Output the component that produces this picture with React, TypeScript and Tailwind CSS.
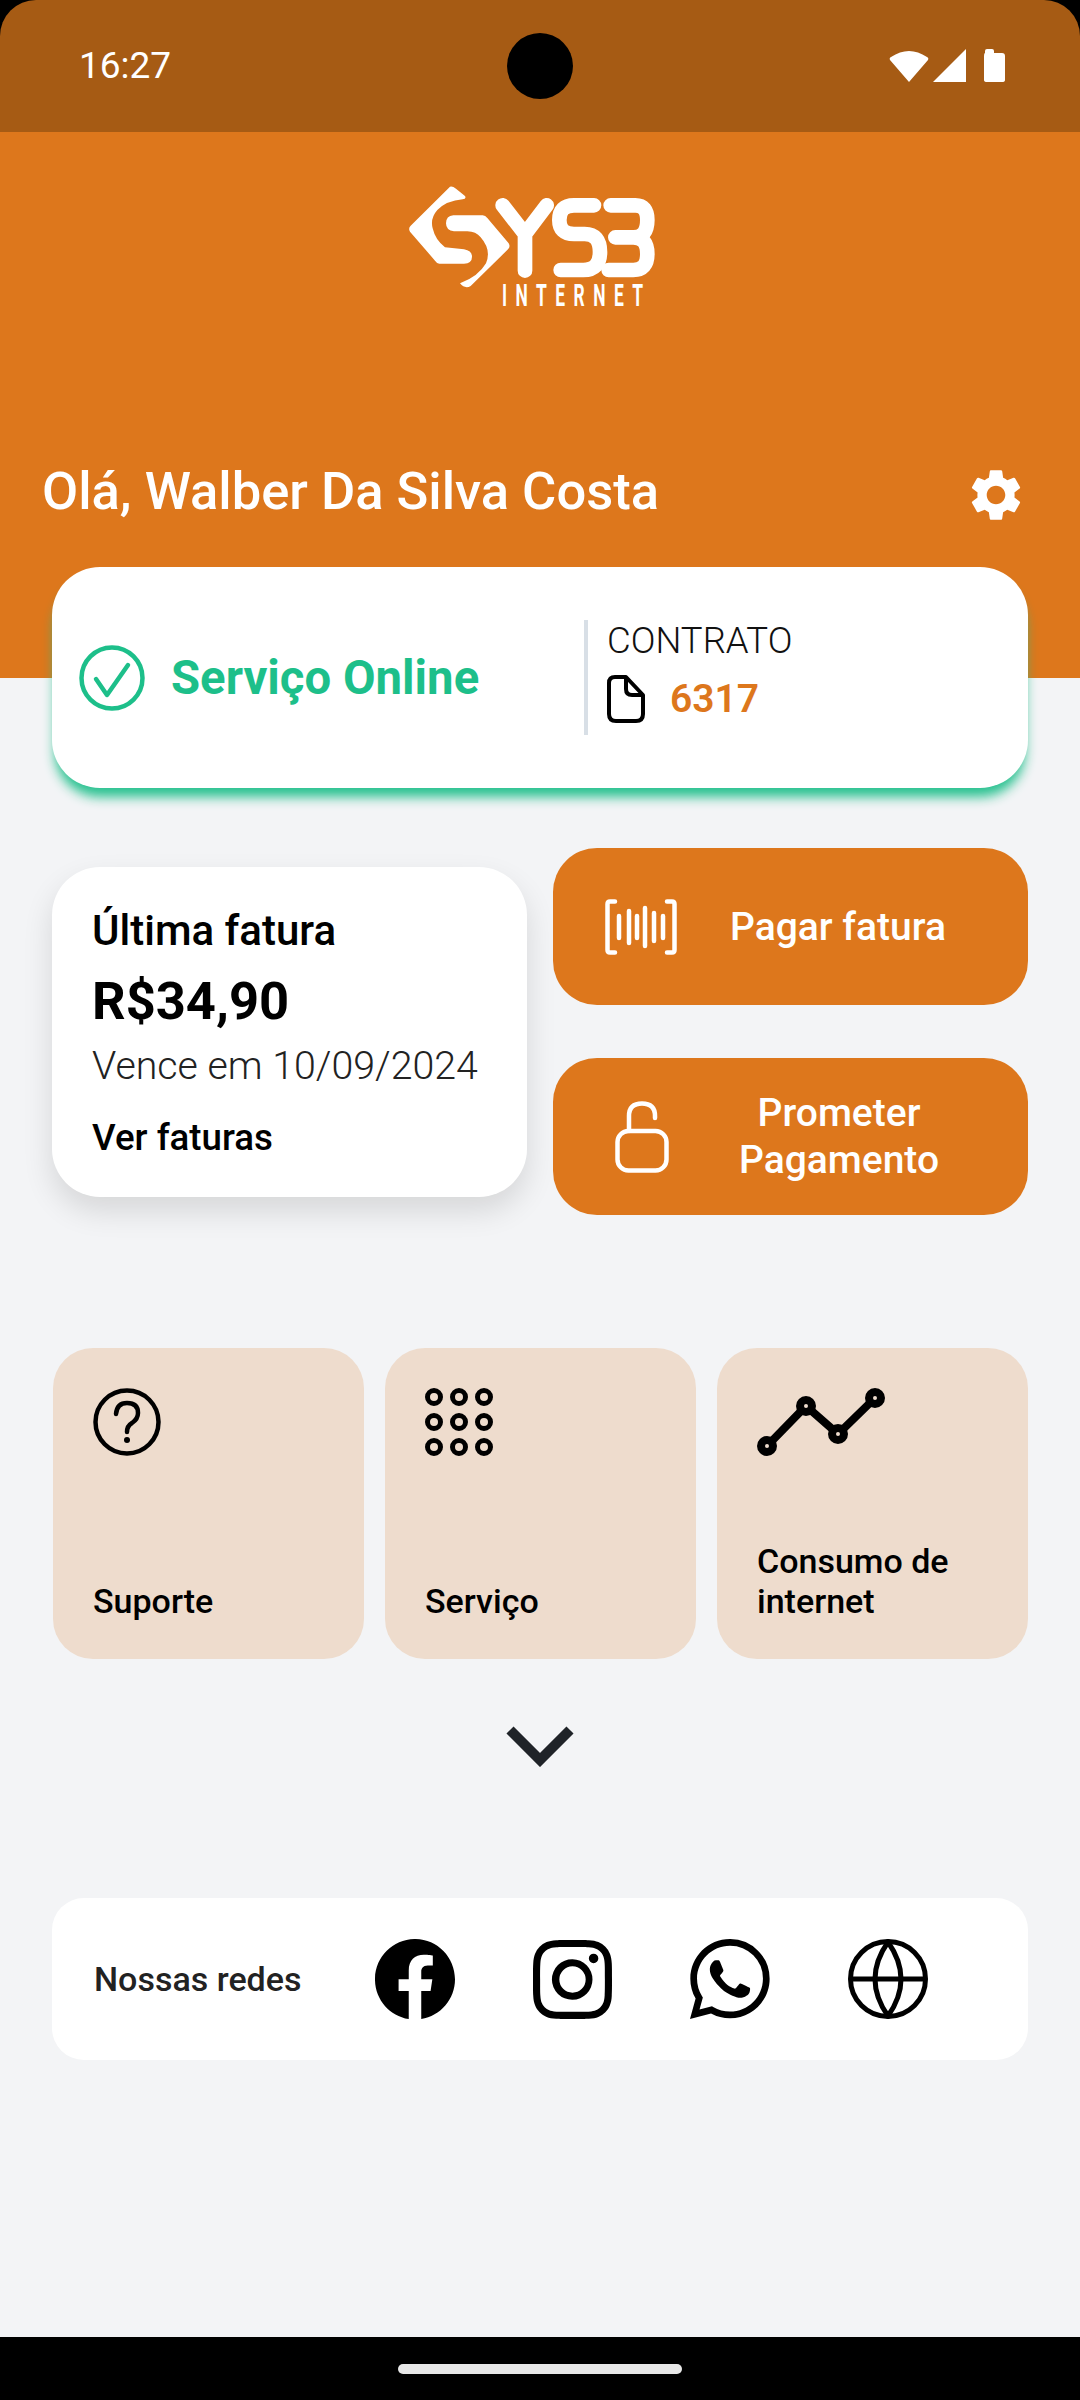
import { MdSettings } from 'react-icons/md';
import { BsFacebook, BsInstagram, BsWhatsapp } from 'react-icons/bs';

const font = { fontFamily: 'Roboto, sans-serif' };

function Logo() {
  return (
    <svg width="340" height="170" viewBox="0 0 1020 510" aria-label="SYS3 Internet">
      <path
        d="M300 80 Q308 78 318 86 L345 108 Q350 116 338 118 Q290 122 262 150 Q240 175 248 205 Q256 240 285 262 L342 268 Q366 272 366 290 Q366 310 342 311 L268 311 Q260 310 255 302 L180 215 Q174 205 182 197 Z"
        fill="#fff"
      />
      <path
        d="M310 166 L398 166 Q406 166 412 174 L476 250 Q482 260 474 268 L362 378 Q345 388 330 370 Q385 350 408 310 Q425 270 392 232 Q378 214 352 214 L312 214 Q288 212 288 190 Q288 168 310 166 Z"
        fill="#fff"
      />
      <g fill="none" stroke="#fff" strokeWidth="44" strokeLinecap="round" strokeLinejoin="round">
        <path d="M458 136 L525 222 L590 136 M525 222 V332" />
        <path d="M732 136 H672 Q628 136 628 180 Q628 222 672 222 H704 Q750 222 750 276 Q750 330 700 330 H632" />
        <path d="M782 136 H856 Q892 136 892 180 Q892 232 850 232 H796 M850 232 Q892 232 892 282 Q892 330 850 330 H776" />
      </g>
      <text
        x="0"
        y="0"
        transform="translate(456 438) scale(0.55 1)"
        fontFamily="Roboto, sans-serif"
        fontWeight="700"
        fontSize="95"
        fill="#fff"
        textLength="770"
        lengthAdjust="spacing"
      >
        INTERNET
      </text>
    </svg>
  );
}

function StatusIcons() {
  return (
    <svg width="116" height="34" viewBox="0 0 116 34" fill="#fff">
      <path d="M2 8 Q20 -4 38 8 Q40 9 39 11 L20 33 L1 11 Q0 9 2 8 Z" />
      <path d="M77 0 V33 H44 Z" />
      <path d="M96 4 V2 Q96 0 98 0 H103 Q105 0 105 2 V4 H113 Q116 4 116 7 V31 Q116 33 113 33 H98 Q95 33 95 31 V7 Q95 4 96 4 Z" />
    </svg>
  );
}

function CheckCircle() {
  return (
    <svg width="66" height="66" viewBox="0 0 66 66" fill="none" stroke="#1dbf8a" strokeWidth="4.5" className="shrink-0">
      <circle cx="33" cy="33" r="30.5" />
      <path d="M17 34 L28 50 L49 20" strokeLinecap="round" strokeLinejoin="round" />
    </svg>
  );
}

function FileIcon() {
  return (
    <svg width="38" height="48" viewBox="0 0 38 48" fill="none" stroke="#000" strokeWidth="4" strokeLinejoin="round" className="shrink-0">
      <path d="M8 2 H19 L36 20 V39 Q36 46 29 46 H9 Q2 46 2 39 V8 Q2 2 8 2 Z" />
      <path d="M19 2 V14 Q19 20 25 20 H36" />
    </svg>
  );
}

function BarcodeIcon() {
  return (
    <svg width="72" height="56" viewBox="0 0 72 56" fill="none" stroke="#fff" strokeWidth="4.5" strokeLinecap="round" className="shrink-0">
      <path d="M10 2.5 H5 Q2.5 2.5 2.5 5 V51 Q2.5 53.5 5 53.5 H10" />
      <path d="M62 2.5 H67 Q69.5 2.5 69.5 5 V51 Q69.5 53.5 67 53.5 H62" />
      <path d="M14 17 V39 M24 12 V44 M32 17 V39 M40 9 V47 M49 14 V42 M58 17 V39" />
    </svg>
  );
}

function LockIcon() {
  return (
    <svg width="54" height="72" viewBox="0 0 54 72" fill="none" stroke="#fff" strokeWidth="4.5" strokeLinecap="round" className="shrink-0">
      <rect x="2.5" y="30" width="49" height="39.5" rx="11" />
      <path d="M14 30 V15 Q14 2.5 27 2.5 Q40 2.5 40 15 V17" />
    </svg>
  );
}

function HelpIcon() {
  return (
    <svg width="68" height="68" viewBox="0 0 68 68" fill="none" stroke="#000" strokeWidth="4.5">
      <circle cx="34" cy="34" r="31.5" />
      <path d="M23 26 Q24 15 34 15 Q45 15 45 25 Q45 31 39 35 Q34 38 34 44" strokeLinecap="round" />
      <circle cx="34" cy="52" r="3" fill="#000" stroke="none" />
    </svg>
  );
}

function GridIcon() {
  const spots = [9, 34, 59];
  return (
    <svg width="68" height="68" viewBox="0 0 68 68" fill="none" stroke="#000" strokeWidth="5">
      {spots.map((y) => spots.map((x) => <circle key={`${x}-${y}`} cx={x} cy={y} r="6.5" />))}
    </svg>
  );
}

function ChartIcon() {
  return (
    <svg width="128" height="68" viewBox="0 0 128 68" fill="none" stroke="#000">
      <path d="M10 58 L49 18 L81 46 L118 10" strokeWidth="8" />
      {[
        [10, 58],
        [49, 18],
        [81, 46],
        [118, 10],
      ].map(([x, y]) => (
        <circle key={x} cx={x} cy={y} r="6" strokeWidth="8" fill="#eedccd" />
      ))}
    </svg>
  );
}

function GlobeIcon() {
  return (
    <svg width="80" height="80" viewBox="0 0 80 80" fill="none" stroke="#000" strokeWidth="5">
      <circle cx="40" cy="40" r="37.5" />
      <path d="M2 40 H78" />
      <path d="M40 3 Q14 40 40 77 Q66 40 40 3 Z" />
    </svg>
  );
}

function Tile({ icon, label }: { icon: React.ReactNode; label: React.ReactNode }) {
  return (
    <div className="flex h-[311px] flex-col justify-between rounded-[40px] bg-[#eedccd] pt-10 pr-4 pb-[38px] pl-10">
      <div>{icon}</div>
      <div className="text-[34px] leading-[40px] font-medium text-black">{label}</div>
    </div>
  );
}

export default function App() {
  return (
    <div className="flex h-[2400px] w-[1080px] flex-col bg-black" style={font}>
      {/* Status bar */}
      <div className="relative flex h-[132px] shrink-0 items-start justify-between rounded-t-[36px] bg-[#a65b14] pt-[46px] pr-[75px] pl-[79px]">
        <span className="text-[37px] leading-[40px] text-white">16:27</span>
        <div className="absolute top-[33px] left-[507px] h-[66px] w-[66px] rounded-full bg-black" />
        <div className="pt-[3px]">
          <StatusIcons />
        </div>
      </div>

      <div className="flex min-h-0 flex-1 flex-col bg-[#f3f4f6]">
        {/* Header */}
        <div className="flex h-[546px] shrink-0 flex-col bg-[#dd771c]">
          <div className="flex justify-center pt-[28px] pr-[40px]">
            <Logo />
          </div>
          <div className="mt-[126px] flex items-center justify-between pr-[53px] pl-[42px]">
            <h1 className="text-[52.5px] leading-[60px] font-medium text-white">Olá, Walber Da Silva Costa</h1>
            <MdSettings className="mt-[8px] h-[62px] w-[62px] text-white" />
          </div>
        </div>

        {/* Service status card */}
        <div className="mx-[52px] mt-[-111px] flex h-[221px] shrink-0 items-center rounded-[48px] bg-white pl-[27px] shadow-[0_12px_12px_-3px_rgba(29,191,138,0.95)]">
          <div className="flex w-[505px] items-center gap-[26px]">
            <CheckCircle />
            <span className="mt-[2px] text-[47.3px] font-bold text-[#1dbf8a]">Serviço Online</span>
          </div>
          <div className="flex h-[115px] items-stretch gap-[19px]">
            <div className="w-1 bg-[#d8dfe6]" />
            <div>
              <div className="mt-[1px] text-[36.5px] leading-[40px] font-light text-[#111]">CONTRATO</div>
              <div className="mt-[14px] flex items-center gap-[25px]">
                <FileIcon />
                <span className="text-[39px] leading-[48px] font-semibold text-[#dd771c]">6317</span>
              </div>
            </div>
          </div>
        </div>

        {/* Invoice and actions */}
        <div className="mx-[52px] mt-[60px] grid shrink-0 grid-cols-2 gap-x-[26px]">
          <div className="mt-[19px] flex h-[330px] flex-col rounded-[48px] bg-white pt-[39px] pl-10 shadow-[0_14px_30px_rgba(0,0,0,0.12)]">
            <div className="text-[42px] leading-[50px] font-medium text-black">Última fatura</div>
            <div className="mt-[14px] text-[52.5px] leading-[62px] font-bold text-black">R$34,90</div>
            <div className="mt-[9px] text-[39.3px] leading-[50px] font-light text-[#222]">Vence em 10/09/2024</div>
            <div className="mt-[25px] text-[36.7px] leading-[44px] font-medium text-black">Ver faturas</div>
          </div>
          <div className="flex flex-col gap-[53px]">
            <div className="flex h-[157px] items-center rounded-[44px] bg-[#dd771c] pl-[52px]">
              <BarcodeIcon />
              <span className="mt-[1px] ml-[53px] text-[39px] font-medium text-white">Pagar fatura</span>
            </div>
            <div className="flex h-[157px] items-center rounded-[44px] bg-[#dd771c] pl-[62px]">
              <LockIcon />
              <span className="mt-[1px] ml-[55px] w-[230px] text-center text-[39px] leading-[47px] font-medium text-white">
                Prometer Pagamento
              </span>
            </div>
          </div>
        </div>

        {/* Shortcuts */}
        <div className="mt-[133px] mr-[52px] ml-[53px] grid shrink-0 grid-cols-3 gap-x-[21px]">
          <Tile icon={<HelpIcon />} label="Suporte" />
          <Tile icon={<GridIcon />} label="Serviço" />
          <Tile icon={<ChartIcon />} label={<>Consumo de<br />internet</>} />
        </div>

        <div className="mt-[66px] flex shrink-0 justify-center">
          <svg width="68" height="42" viewBox="0 0 68 42" fill="none" stroke="#1f2328" strokeWidth="10">
            <path d="M4 5 L34 35 L64 5" />
          </svg>
        </div>

        {/* Social links */}
        <div className="mx-[52px] mt-[131px] flex h-[162px] shrink-0 items-center rounded-[32px] bg-white pl-[42px]">
          <span className="mt-[1px] w-[281px] text-[34px] font-medium text-[#222]">Nossas redes</span>
          <div className="flex items-center gap-[78px]">
            <BsFacebook className="h-[80px] w-[80px] text-black" />
            <BsInstagram className="h-[79px] w-[79px] text-black" />
            <BsWhatsapp className="h-[80px] w-[80px] text-black" />
            <GlobeIcon />
          </div>
        </div>
      </div>

      {/* Navigation bar */}
      <div className="flex h-[63px] shrink-0 items-start justify-center bg-black pt-[27px]">
        <div className="h-[10px] w-[284px] rounded-full bg-[#e8e8e8]" />
      </div>
    </div>
  );
}
